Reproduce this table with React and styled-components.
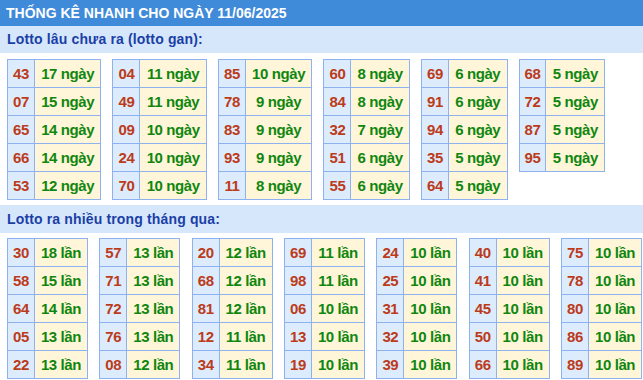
import React from "react";
import styled, { createGlobalStyle } from "styled-components";

const GlobalStyle = createGlobalStyle`
  body {
    margin: 0;
    background: #ffffff;
    font-family: "Liberation Sans", Arial, sans-serif;
  }
`;

const Page = styled.div`
  width: 643px;
  height: 380px;
  overflow: hidden;
`;

const Header = styled.div`
  height: 26px;
  background: #3f8ad9;
  color: #ffffff;
  font-size: 14px;
  font-weight: bold;
  line-height: 27px;
  padding-left: 6px;
  white-space: nowrap;
`;

const SectionTitle = styled.div`
  height: ${(p) => p.h || 27}px;
  line-height: ${(p) => p.h || 27}px;
  background: #d7e7fb;
  color: #1a3fa6;
  font-size: 14px;
  font-weight: bold;
  letter-spacing: 0.15px;
  padding-left: 7px;
`;

const Groups = styled.div`
  display: flex;
  align-items: flex-start;
  gap: ${(p) => p.gap || 11}px;
  padding: ${(p) => p.pt || 6}px 0 5px 7px;
`;

const Table = styled.table`
  border-collapse: collapse;
  border: 1px solid #8eb1ef;
  flex-shrink: 0;
`;

const Num = styled.td`
  height: 27px;
  padding: 0 5px;
  border: 1px solid #8eb1ef;
  background: #ddecfc;
  color: #bb3b1b;
  font-size: 15px;
  font-weight: bold;
  letter-spacing: -0.4px;
  text-align: center;
  white-space: nowrap;
`;

const Val = styled(Num)`
  background: #fff5d9;
  color: #0f870f;
  padding: 0 ${(p) => p.px || 6.25}px;
`;

const gan = [
  [["43", 17], ["07", 15], ["65", 14], ["66", 14], ["53", 12]],
  [["04", 11], ["49", 11], ["09", 10], ["24", 10], ["70", 10]],
  [["85", 10], ["78", 9], ["83", 9], ["93", 9], ["11", 8]],
  [["60", 8], ["84", 8], ["32", 7], ["51", 6], ["55", 6]],
  [["69", 6], ["91", 6], ["94", 6], ["35", 5], ["64", 5]],
  [["68", 5], ["72", 5], ["87", 5], ["95", 5]],
];

const nhieu = [
  [["30", 18], ["58", 15], ["64", 14], ["05", 13], ["22", 13]],
  [["57", 13], ["71", 13], ["72", 13], ["76", 13], ["08", 12]],
  [["20", 12], ["68", 12], ["81", 12], ["12", 11], ["34", 11]],
  [["69", 11], ["98", 11], ["06", 10], ["13", 10], ["19", 10]],
  [["24", 10], ["25", 10], ["31", 10], ["32", 10], ["39", 10]],
  [["40", 10], ["41", 10], ["45", 10], ["50", 10], ["66", 10]],
  [["75", 10], ["78", 10], ["80", 10], ["86", 10], ["89", 10]],
];

const Group = ({ rows, unit, px }) => (
  <Table>
    <tbody>
      {rows.map(([n, c]) => (
        <tr key={n}>
          <Num>{n}</Num>
          <Val px={px}>
            {c} {unit}
          </Val>
        </tr>
      ))}
    </tbody>
  </Table>
);

export default function App() {
  return (
    <Page>
      <GlobalStyle />
      <Header>THỐNG KÊ NHANH CHO NGÀY 11/06/2025</Header>
      <SectionTitle>Lotto lâu chưa ra (lotto gan):</SectionTitle>
      <Groups>
        {gan.map((g, i) => (
          <Group key={i} rows={g} unit="ngày" />
        ))}
      </Groups>
      <SectionTitle h={28}>Lotto ra nhiều trong tháng qua:</SectionTitle>
      <Groups pt={5} gap={11.3}>
        {nhieu.map((g, i) => (
          <Group key={i} rows={g} unit="lần" px={6} />
        ))}
      </Groups>
    </Page>
  );
}
